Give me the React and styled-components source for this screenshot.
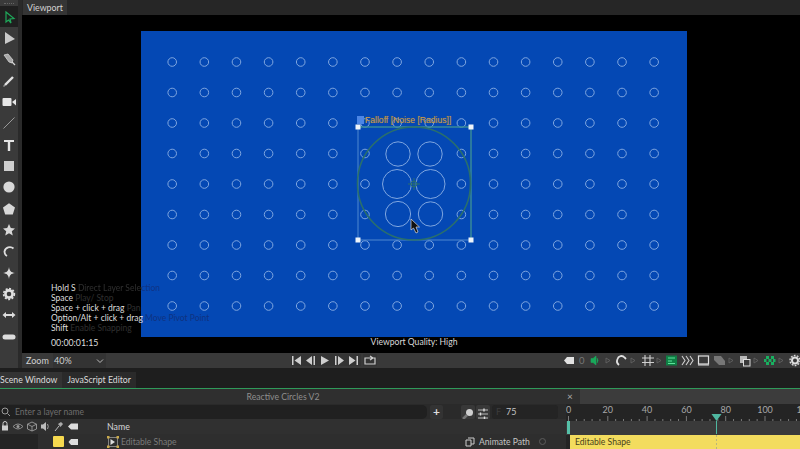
import React from "react";
import styled, { createGlobalStyle } from "styled-components";

const GlobalStyle = createGlobalStyle`
  html, body { margin: 0; padding: 0; background: #000; }
  body { font-family: Lato, "Liberation Sans", sans-serif; }
`;

const Page = styled.div`
  width: 800px;
  height: 449px;
  overflow: hidden;
  display: flex;
  flex-direction: column;
  background: #1c1c1c;
`;

const Upper = styled.div`
  height: 368px;
  display: flex;
  flex: none;
`;

const ToolRail = styled.div`
  width: 18px;
  flex: none;
  background: #3a3a3a;
  border-right: 4px solid #2a2a2a;
  display: flex;
  flex-direction: column;
`;

const Grip = styled.div`
  height: 6px;
  flex: none;
  margin: 0 4px;
  box-sizing: border-box;
  border-top: 1px dotted #666;
  transform: translateY(3px);
`;

const Tool = styled.div`
  height: 21.35px;
  flex: none;
  display: flex;
  align-items: center;
  justify-content: center;
  background: ${(p) => (p.$active ? "#1f1f1f" : "transparent")};
`;

const Main = styled.div`
  flex: 1;
  display: flex;
  flex-direction: column;
  min-width: 0;
`;

const TabStrip = styled.div`
  height: 15px;
  flex: none;
  background: #262626;
  display: flex;
`;

const ViewTab = styled.div`
  padding: 0 4px;
  margin-left: 1px;
  background: #353535;
  color: #d4d4d4;
  font-size: 8.8px;
  line-height: 15px;
`;

const Viewport = styled.div`
  position: relative;
  height: 338px;
  flex: none;
  background: #000;
  padding: 16px 0 0 119px;
  box-sizing: border-box;
`;

const Canvas = styled.div`
  position: relative;
  width: 546px;
  height: 306px;
  background: #0448b4;
`;

const Scene = styled.svg`
  display: block;
`;

const FalloffLabel = styled.div`
  position: absolute;
  left: 224px;
  top: 84px;
  color: #c99a4e;
  font-family: "Liberation Sans", sans-serif;
  font-size: 8.6px;
  line-height: 11px;
  white-space: nowrap;
  text-shadow: 0 0 1px #5f6d63;
`;

const Quality = styled.div`
  width: 546px;
  text-align: center;
  color: #d8d8d8;
  font-size: 8.6px;
  line-height: 11px;
`;

const Hints = styled.div`
  position: absolute;
  left: 29px;
  top: 268px;
  font-size: 8.5px;
  line-height: 10px;
  color: #dedede;
  white-space: nowrap;
`;

// the hint text sits partly over the blue canvas, where the dim colour turns navy
const Dim = styled.span`
  color: ${(p) => (p.$over ? "#0f3281" : "#303030")};
`;

const DimCrossing = styled.span`
  color: transparent;
  background: linear-gradient(90deg, #303030 0 ${(p) => p.$split}px, #0f3281 ${(p) => p.$split}px);
  -webkit-background-clip: text;
  background-clip: text;
`;

const Timecode = styled.div`
  margin-top: 5px;
  font-size: 8.8px;
`;

const ControlBar = styled.div`
  height: 15px;
  flex: none;
  background: #393939;
  display: flex;
  align-items: center;
  color: #d0d0d0;
  font-size: 9px;
`;

const ZoomLabel = styled.span`
  margin-left: 4px;
  width: 27px;
`;

const ZoomSelect = styled.div`
  width: 53px;
  height: 15px;
  box-sizing: border-box;
  padding: 0 2px 0 1px;
  background: #333;
  display: flex;
  align-items: center;
  justify-content: space-between;
`;

const Transport = styled.div`
  margin-left: 185px;
  display: flex;
  align-items: center;
`;

const ViewTools = styled.div`
  margin-left: auto;
`;

const Tabs = styled.div`
  height: 20px;
  flex: none;
  background: #1e1e1e;
  display: flex;
  align-items: flex-end;
  font-size: 8.7px;
  color: #dcdcdc;
`;

const EditorTab = styled.div`
  height: 16px;
  line-height: 16px;
  padding: 0 5px 0 ${(p) => (p.$first ? "0" : "5px")};
  background: ${(p) => (p.$active ? "#333" : "#2a2a2a")};
  white-space: nowrap;
`;

const TitleBar = styled.div`
  height: 15px;
  flex: none;
  border-top: 1px solid #2f9a5a;
  display: flex;
  background: #3c3c3c;
  font-size: 8.7px;
  color: #8e8e8e;
`;

const TitleMain = styled.div`
  width: 580px;
  background: #2f2f2f;
  position: relative;
  text-align: center;
  line-height: 15px;
  padding-right: 14px;
  box-sizing: border-box;
`;

const CloseMark = styled.span`
  position: absolute;
  left: 567px;
  top: 0;
  color: #aaa;
  font-size: 10px;
`;

const Bottom = styled.div`
  flex: 1;
  display: flex;
  min-height: 0;
`;

const LayerPane = styled.div`
  width: 566px;
  flex: none;
  background: #2d2d2d;
  display: flex;
  flex-direction: column;
`;

const SearchRow = styled.div`
  height: 15px;
  flex: none;
  display: flex;
  align-items: center;
  background: #2a2a2a;
`;

const SearchBox = styled.div`
  width: 427px;
  height: 14px;
  flex: none;
  box-sizing: border-box;
  display: flex;
  align-items: center;
  gap: 4px;
  padding-left: 1px;
  background: #202020;
  border-radius: 0 5px 5px 0;
  color: #6e6e6e;
  font-size: 8.5px;
`;

const PlusButton = styled.div`
  width: 13px;
  height: 14px;
  margin-left: 3px;
  background: #333;
  border-radius: 2px;
  color: #ddd;
  text-align: center;
  font-size: 12px;
  font-weight: 700;
  line-height: 14px;
`;

const SearchTools = styled.div`
  margin-left: 18px;
  display: flex;
  align-items: center;
  gap: 1px;
`;

const SmallButton = styled.div`
  width: 14px;
  height: 14px;
  background: #383838;
  border-radius: 2px;
`;

const FrameField = styled.div`
  width: 66px;
  height: 14px;
  margin-left: 1px;
  box-sizing: border-box;
  display: flex;
  gap: 5px;
  padding-left: 4px;
  background: #242424;
  border-radius: 3px;
  color: #c4c4c4;
  font-size: 9px;
  line-height: 14px;
`;

const FrameMark = styled.span`
  color: #3c3c3c;
`;

const HeaderRow = styled.div`
  height: 15px;
  flex: none;
  display: flex;
  align-items: center;
  background: #303030;
  color: #d6d6d6;
  font-size: 8.8px;
`;

const NameHead = styled.span`
  margin-left: 27px;
`;

const LayerRow = styled.div`
  flex: 1;
  display: flex;
  align-items: center;
  background: #2e2e2e;
  color: #7a7a7a;
  font-size: 8.6px;
`;

const MutedBlock = styled.div`
  width: 38px;
  height: 100%;
  flex: none;
  background: #242424;
`;

const Swatch = styled.div`
  width: 11px;
  height: 11px;
  flex: none;
  margin-left: 15px;
  background: #f6d94f;
  border-radius: 1px;
`;

const ShapeName = styled.span`
  margin-left: 2px;
  width: 344px;
  flex: none;
  white-space: nowrap;
`;

const AnimatePath = styled.span`
  margin-left: 4px;
  color: #c4c4c4;
  font-size: 8.6px;
  white-space: nowrap;
`;

const KeyDot = styled.span`
  width: 5px;
  height: 5px;
  margin-left: 9px;
  flex: none;
  border: 1px solid #5c5c5c;
  border-radius: 50%;
`;

const Timeline = styled.div`
  flex: 1;
  position: relative;
  background: #242424;
`;

const Track = styled.div`
  height: 14px;
  background: #3a3a3a;
`;

const Clip = styled.div`
  height: 14px;
  margin-left: 4px;
  background: #f3dc5e;
  color: #47411c;
  font-size: 8.6px;
  line-height: 14px;
  padding-left: 5px;
`;

const Playhead = styled.svg`
  position: absolute;
  left: 145px;
  top: 8px;
`;

const WorkStart = styled.div`
  position: absolute;
  left: 1px;
  top: 17px;
  width: 3px;
  height: 13px;
  background: #55c0a8;
`;

const G = "#d6d6d6";
const Ic = ({ children }) => (
  <svg width="14" height="14" viewBox="0 0 14 14" style={{ display: "block", flex: "none" }}>
    {children}
  </svg>
);

const toolIcons = [
  <path d="M4 2 L12 8.5 L8 9 L9 13 L6.5 10 L4 12 Z" fill="none" stroke="#1fa85a" strokeWidth="1.2" />,
  <path d="M3 1 L13 8 L3 13 Z" fill="#c9c9c9" />,
  <g><path d="M2 3 L6 2 L11 8 L10 11 L7 10 Z" fill="#a8a8a8" stroke="#e0e0e0" strokeWidth=".7" /><path d="M10 10 L13 13" stroke={G} strokeWidth="1.2" /></g>,
  <g><path d="M3 11 L11 3" stroke="#e2e2e2" strokeWidth="2.4" /><path d="M1.5 12.5 L3 11" stroke="#999" strokeWidth="1.4" /></g>,
  <g><rect x="0.5" y="3" width="9" height="8" rx="1" fill="#e6e6e6" /><path d="M10 7 L14 4 V10.5 Z" fill="#e6e6e6" /></g>,
  <path d="M1.5 12.5 L12.5 1.5" stroke="#999" strokeWidth="1" />,
  <path d="M2 2 H12 V4 H8.2 V13 H5.8 V4 H2 Z" fill="#e6e6e6" />,
  <rect x="2" y="2" width="10" height="10" fill="#cfcfcf" />,
  <circle cx="7" cy="7" r="5.6" fill="#d8d8d8" />,
  <path d="M7 1.2 L13 5.6 L10.8 12.6 H3.2 L1 5.6 Z" fill="#d8d8d8" />,
  <path d="M7 1 L8.8 5 L13 5.4 L9.8 8.2 L10.8 12.6 L7 10.2 L3.2 12.6 L4.2 8.2 L1 5.4 L5.2 5 Z" fill="#d8d8d8" />,
  <path d="M11.5 4.5 A5.5 5.5 0 0 0 2.5 7.5 A5 5 0 0 0 5 12" fill="none" stroke="#dcdcdc" strokeWidth="1.8" />,
  <path d="M7 1 C7.6 5 9 6.4 13 7 C9 7.6 7.6 9 7 13 C6.4 9 5 7.6 1 7 C5 6.4 6.4 5 7 1 Z" fill="#dcdcdc" />,
  <g><circle cx="7" cy="7" r="3.6" fill="none" stroke="#e0e0e0" strokeWidth="2.6" /><circle cx="7" cy="7" r="5.4" fill="none" stroke="#e0e0e0" strokeWidth="1.6" strokeDasharray="2 1.55" /></g>,
  <path d="M0.5 7 L4 4 V6 H10 V4 L13.5 7 L10 10 V8 H4 V10 Z" fill="#dcdcdc" />,
  <rect x="0.5" y="4.5" width="13" height="5" rx="2.5" fill="#dcdcdc" />,
];

const cols = Array.from({ length: 16 }, (_, i) => 31.2 + i * 32.13);
const rows = Array.from({ length: 9 }, (_, i) => 31 + i * 30.5);
const STROKE = "#7fa6e0";

// circles swell inside the falloff radius around the pivot
const swollen = {
  "7,3": { cx: 257, cy: 123, r: 12.2 },
  "8,3": { cx: 289, cy: 123, r: 12.2 },
  "7,4": { cx: 256, cy: 153, r: 14.5 },
  "8,4": { cx: 289.5, cy: 153, r: 14.5 },
  "7,5": { cx: 257, cy: 183, r: 12.6 },
  "8,5": { cx: 289.5, cy: 183, r: 12.2 },
};

const handles = [
  [217, 96],
  [330, 96],
  [217, 209],
  [330, 209],
];

function SceneDrawing() {
  return (
    <Scene width="546" height="306" viewBox="0 0 546 306">
      {rows.map((y, r) =>
        cols.map((x, c) => {
          const s = swollen[`${c},${r}`] || { cx: x, cy: y, r: 4.3 };
          return <circle key={`${r}-${c}`} cx={s.cx} cy={s.cy} r={s.r} fill="none" stroke={STROKE} strokeWidth="1" />;
        })
      )}
      <rect x="217" y="96" width="113" height="113" fill="none" stroke="#4f87cf" strokeWidth="1" />
      <path d="M217 96 H330 V209" fill="none" stroke="#2c8a7c" strokeWidth="1" />
      <circle cx="273" cy="152.5" r="56.5" fill="none" stroke="#2a6f6c" strokeWidth="1.6" />
      <circle cx="273" cy="153" r="3" fill="none" stroke="#2a6f6c" strokeWidth="1" />
      <path d="M267 153 H279 M273 147 V159" stroke="#2a6f6c" strokeWidth="1" />
      {handles.map(([x, y]) => (
        <rect key={`${x}-${y}`} x={x - 2.5} y={y - 2.5} width="5" height="5" fill="#eef4fa" />
      ))}
      <rect x="216" y="85" width="7" height="8" fill="#4c86e6" />
      <path d="M270 188 V199 L272.5 197 L275 202 L277 201 L275 196 L278.5 196 Z" fill="#111" stroke="#ddd" strokeWidth=".7" />
    </Scene>
  );
}

function TransportIcons() {
  const c = "#cfcfcf";
  return (
    <svg width="92" height="15" viewBox="0 0 92 15" style={{ display: "block" }}>
      <rect x="0" y="1" width="70" height="12" fill="#2f2f2f" opacity=".5" />
      <rect x="72" y="1" width="14" height="12" fill="#2f2f2f" opacity=".5" />
      <path d="M1 3 H2.5 V12 H1 Z M10 3 V12 L3.5 7.5 Z" fill={c} />
      <path d="M21 3 V12 L15 7.5 Z M22.5 3 H24 V12 H22.5 Z" fill={c} />
      <path d="M30 3 L38 7.5 L30 12 Z" fill={c} />
      <path d="M44 3 H45.5 V12 H44 Z M47 3 L53 7.5 L47 12 Z" fill={c} />
      <path d="M58 3 L64.5 7.5 L58 12 Z M65.5 3 H67 V12 H65.5 Z" fill={c} />
      <path d="M74 5 H84 V11 H74 Z M79 3 L82 5 L79 7" fill="none" stroke={c} strokeWidth="1.2" />
    </svg>
  );
}

function ViewToolIcons() {
  const c = "#d0d0d0";
  const tri = (x) => <path key={x} d={`M${x} 5 L${x + 4} 7.5 L${x} 10 Z`} fill="none" stroke="#666" strokeWidth=".8" />;
  return (
    <svg width="236" height="15" viewBox="0 0 236 15" style={{ display: "block", overflow: "hidden" }}>
      <path d="M0 7.5 L3 4 H10 V11 H3 Z" fill="#e2e2e2" />
      <text x="15" y="11" fontSize="9.5" fill="#777" fontFamily="Lato, sans-serif">0</text>
      <path d="M27 5.5 H29 L32 3 V12 L29 9.5 H27 Z M33 5 Q35 7.5 33 10" fill="#19a85a" stroke="#19a85a" strokeWidth=".6" />
      {tri(42)}
      <path d="M55 12 A5 5 0 0 1 53.5 6 A4 4 0 0 1 60.5 4.5 L62 6" fill="none" stroke="#e0e0e0" strokeWidth="1.8" />
      {tri(67)}
      <path d="M78 5 H90 M78 9.5 H90 M81 2 V13 M86 2 V13" stroke={c} strokeWidth="1.1" />
      {tri(93)}
      <rect x="102" y="2.5" width="11" height="10" fill="#0f7f44" />
      <path d="M104 5 H111 M104 8 H108 M104 10.5 H111" stroke="#5ce39b" strokeWidth="1" />
      <path d="M118 3 L121 7.5 L118 12 M122 3 L125 7.5 L122 12 M126 3 L129 7.5 L126 12" fill="none" stroke={c} strokeWidth="1.1" />
      <rect x="134.5" y="3" width="10" height="8" fill="none" stroke="#e0e0e0" strokeWidth="1.2" />
      <path d="M134 12 H145" stroke="#e0e0e0" strokeWidth="1" />
      <path d="M150 3 H157 L161 8 V12 H155 L150 7 Z" fill="#777" />
      {tri(165)}
      <rect x="176" y="3" width="7" height="7" fill="#b8b8b8" />
      <rect x="179.5" y="6.5" width="6.5" height="6.5" fill="#3a3a3a" stroke="#ddd" strokeWidth="1" />
      {tri(190)}
      <g fill="#19b060">
        <rect x="202" y="3" width="3" height="3" />
        <rect x="207" y="3" width="3" height="3" />
        <rect x="204.5" y="6" width="3" height="3" />
        <rect x="200" y="6" width="2.5" height="3" />
        <rect x="209" y="6" width="2.5" height="3" />
        <rect x="202" y="9" width="3" height="3" />
        <rect x="207" y="9" width="3" height="3" />
      </g>
      {tri(215)}
      <circle cx="231" cy="7.5" r="3" fill="none" stroke="#ddd" strokeWidth="2" />
      <circle cx="231" cy="7.5" r="5" fill="none" stroke="#ddd" strokeWidth="1.4" strokeDasharray="1.8 1.3" />
    </svg>
  );
}

function HeaderIcons() {
  return (
    <svg width="80" height="15" viewBox="0 0 80 15" style={{ display: "block", flex: "none" }}>
      <rect x="2" y="6.5" width="6" height="5" fill="#cfcfcf" />
      <path d="M3 7 V4.5 A2 2 0 0 1 7 4.5 V7" fill="none" stroke="#cfcfcf" strokeWidth="1" />
      <path d="M13 7.5 Q18 2.5 23 7.5 Q18 12.5 13 7.5 Z" fill="none" stroke="#999" strokeWidth=".9" />
      <circle cx="18" cy="7.5" r="1.5" fill="#999" />
      <path d="M32 3 L36.5 5.2 V10 L32 12 L27.5 10 V5.2 Z M27.5 5.2 L32 7.5 L36.5 5.2 M32 7.5 V12" fill="none" stroke="#aaa" strokeWidth=".8" />
      <path d="M41 5.5 H43 L46 3 V12 L43 9.5 H41 Z" fill="#bbb" />
      <path d="M47.5 5 Q49 7.5 47.5 10" fill="none" stroke="#bbb" strokeWidth=".8" />
      <path d="M55 12 L59 7" stroke="#bbb" strokeWidth="1" />
      <path d="M58 5 L61 3 L63 5 L60.5 8 Z" fill="#aaa" />
      <path d="M68 7.5 L71 4.5 H78 V10.5 H71 Z" fill="#ddd" />
    </svg>
  );
}

function Ruler() {
  const labels = [0, 20, 40, 60, 80, 100, 120];
  const ticks = Array.from({ length: 33 }, (_, i) => i);
  return (
    <svg width="234" height="17" viewBox="0 0 234 17" style={{ display: "block" }}>
      {labels.map((l, i) => (
        <text key={l} x={2.5 + i * 39.3} y="9" fontSize="9" textAnchor="middle" fill="#a8a8a8" fontFamily="Lato, sans-serif">
          {l}
        </text>
      ))}
      {ticks.map((t) => (
        <path key={t} d={`M${2.5 + t * 7.86} ${t % 5 === 0 ? 12 : 15} V17`} stroke="#8f8f8f" strokeWidth=".8" />
      ))}
    </svg>
  );
}

export default function App() {
  return (
    <Page>
      <GlobalStyle />
      <Upper>
        <ToolRail>
          <Grip />
          {toolIcons.map((icon, i) => (
            <Tool key={i} $active={i === 0}>
              <Ic>{icon}</Ic>
            </Tool>
          ))}
        </ToolRail>
        <Main>
          <TabStrip>
            <ViewTab>Viewport</ViewTab>
          </TabStrip>
          <Viewport>
            <Canvas>
              <SceneDrawing />
              <FalloffLabel>Falloff [Noise [Radius]]</FalloffLabel>
            </Canvas>
            <Quality>Viewport Quality: High</Quality>
            <Hints>
              <div>Hold S <DimCrossing $split={64}>Direct Layer Selection</DimCrossing></div>
              <div>Space <Dim>Play/ Stop</Dim></div>
              <div>Space + click + drag <Dim>Pan</Dim></div>
              <div>Option/Alt + click + drag <Dim $over>Move Pivot Point</Dim></div>
              <div>Shift <Dim>Enable Snapping</Dim></div>
              <Timecode>00:00:01:15</Timecode>
            </Hints>
          </Viewport>
          <ControlBar>
            <ZoomLabel>Zoom</ZoomLabel>
            <ZoomSelect>
              <span>40%</span>
              <svg width="8" height="8" viewBox="0 0 8 8"><path d="M1 2.5 L4 5.5 L7 2.5" fill="none" stroke="#bbb" strokeWidth="1" /></svg>
            </ZoomSelect>
            <Transport>
              <TransportIcons />
            </Transport>
            <ViewTools>
              <ViewToolIcons />
            </ViewTools>
          </ControlBar>
        </Main>
      </Upper>
      <Tabs>
        <EditorTab $first $active>Scene Window</EditorTab>
        <EditorTab>JavaScript Editor</EditorTab>
      </Tabs>
      <TitleBar>
        <TitleMain>
          Reactive Circles V2
          <CloseMark>×</CloseMark>
        </TitleMain>
      </TitleBar>
      <Bottom>
        <LayerPane>
          <SearchRow>
            <SearchBox>
              <svg width="10" height="10" viewBox="0 0 10 10"><circle cx="4" cy="4" r="3" fill="none" stroke="#999" strokeWidth="1" /><path d="M6.5 6.5 L9 9" stroke="#999" strokeWidth="1" /></svg>
              Enter a layer name
            </SearchBox>
            <PlusButton>+</PlusButton>
            <SearchTools>
              <SmallButton>
                <svg width="14" height="14" viewBox="0 0 14 14"><circle cx="8.5" cy="5.5" r="3.5" fill="#cfcfcf" /><path d="M2 12 L6 8" stroke="#777" strokeWidth="2.5" /></svg>
              </SmallButton>
              <SmallButton>
                <svg width="14" height="14" viewBox="0 0 14 14"><path d="M2 3 H12 M2 7 H12 M2 11 H12" stroke="#bbb" strokeWidth="1" /><path d="M8 1.5 V4.5 M4.5 5.5 V8.5 M8.5 9.5 V12.5" stroke="#ddd" strokeWidth="1.4" /></svg>
              </SmallButton>
              <FrameField>
                <FrameMark>F</FrameMark>
                <span>75</span>
              </FrameField>
            </SearchTools>
          </SearchRow>
          <HeaderRow>
            <HeaderIcons />
            <NameHead>Name</NameHead>
          </HeaderRow>
          <LayerRow>
            <MutedBlock />
            <Swatch />
            <svg width="10" height="8" viewBox="0 0 10 8" style={{ marginLeft: 4, flex: "none" }}><path d="M0.5 4 L3 1 H10 V7 H3 Z" fill="#ddd" /></svg>
            <svg width="12" height="12" viewBox="0 0 12 12" style={{ marginLeft: 29, flex: "none" }}>
              <path d="M1.5 1.5 H10.5 V10.5 H1.5 Z" fill="none" stroke="#9a9a9a" strokeWidth=".8" />
              <path d="M3.5 3 L8 6 L3.5 9 Z" fill="#ddd" />
              <rect x="0" y="0" width="2.5" height="2.5" fill="#c9a94a" />
              <rect x="9.5" y="0" width="2.5" height="2.5" fill="#c9a94a" />
              <rect x="0" y="9.5" width="2.5" height="2.5" fill="#c9a94a" />
              <rect x="9.5" y="9.5" width="2.5" height="2.5" fill="#c9a94a" />
            </svg>
            <ShapeName>Editable Shape</ShapeName>
            <svg width="10" height="10" viewBox="0 0 10 10" style={{ flex: "none" }}><path d="M3 1 H9 V7 H6 M1 3 H6 V9 H1 Z" fill="none" stroke="#ccc" strokeWidth="1" /></svg>
            <AnimatePath>Animate Path</AnimatePath>
            <KeyDot />
          </LayerRow>
        </LayerPane>
        <Timeline>
          <Ruler />
          <Track />
          <Clip>Editable Shape</Clip>
          <WorkStart />
          <Playhead width="12" height="37" viewBox="0 0 12 37">
            <path d="M5.5 9 V22" stroke="#4fb7a0" strokeWidth="1" />
            <path d="M5.5 23 V37" stroke="#b9b67a" strokeWidth="1" strokeDasharray="2 2" />
            <path d="M0.5 2 H10.5 L5.5 9 Z" fill="#4fb7a0" />
          </Playhead>
        </Timeline>
      </Bottom>
    </Page>
  );
}
